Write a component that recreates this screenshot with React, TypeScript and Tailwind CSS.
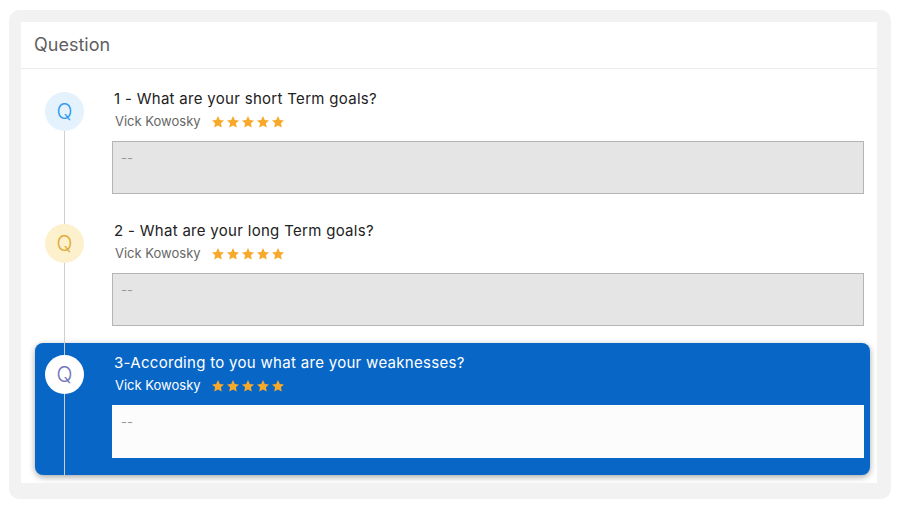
const questions = [
  { id: 1, text: "1 - What are your short Term goals?", tone: "blue" },
  { id: 2, text: "2 - What are your long Term goals?", tone: "yellow" },
  { id: 3, text: "3-According to you what are your weaknesses?", tone: "active" },
];

function Star() {
  return (
    <svg width="14" height="14" viewBox="0 0 24 24" className="fill-[#f7a92b]">
      <path d="M12 1.8l3.1 6.6 7.2.9-5.3 5 1.4 7.1L12 17.9l-6.4 3.5 1.4-7.1-5.3-5 7.2-.9z" />
    </svg>
  );
}

function Stars() {
  return (
    <div className="flex items-center gap-[1px]">
      {[0, 1, 2, 3, 4].map((i) => (
        <Star key={i} />
      ))}
    </div>
  );
}

function QuestionItem({ q, first }: { q: (typeof questions)[number]; first: boolean }) {
  const active = q.tone === "active";
  const circle =
    q.tone === "blue"
      ? "bg-[#e4f2fd] text-[#2f9af0]"
      : q.tone === "yellow"
        ? "bg-[#fdf1cd] text-[#e0aa35]"
        : "bg-white text-[#6f72bb]";

  return (
    <div
      className={
        active
          ? "flex pl-[10px] pr-[6px] bg-[#0866c6] rounded-lg shadow-[0_2px_6px_rgba(0,0,0,0.35)] -mt-px"
          : "flex pl-[10px] pr-[6px]"
      }
    >
      <div className="flex flex-col items-center w-[39px] shrink-0">
        <div className={first ? "h-3 w-px" : "h-3 w-px bg-[#cfcfcf]"} />
        <div
          className={`w-[39px] h-[39px] rounded-full flex items-center justify-center text-[21px] font-light ${circle}`}
        >
          Q
        </div>
        <div className="flex-1 w-px bg-[#cfcfcf]" />
      </div>
      <div className={active ? "flex-1 ml-[30px] pt-[10px] pb-[17px]" : "flex-1 ml-[30px] pt-[9px] pb-[18px]"}>
        <div
          className={
            active
              ? "text-[15px] leading-5 tracking-[0.02em] text-white"
              : "text-[15px] leading-5 tracking-[0.02em] text-[#222]"
          }
        >
          {q.text}
        </div>
        <div className="flex items-center gap-[10px] mt-[3px] h-5 pl-[1px]">
          <span className={active ? "text-[13px] text-white" : "text-[13px] text-[#666]"}>Vick Kowosky</span>
          <Stars />
        </div>
        <div
          className={
            active
              ? "-ml-[2px] mt-[9px] h-[53px] bg-[#fcfcfc] px-[9px] pt-2 text-[13px] text-[#999]"
              : "-ml-[2px] mt-[9px] h-[53px] bg-[#e5e5e5] border border-[#b5b5b5] px-2 pt-[7px] text-[13px] text-[#999]"
          }
        >
          --
        </div>
      </div>
    </div>
  );
}

export default function App() {
  return (
    <div className="w-[900px] h-[508px] bg-white pt-[10px] pl-[9px] font-['Inter',sans-serif]">
      <div className="w-[882px] h-[489px] bg-[#f2f2f2] rounded-[10px] pt-3 pl-3 pr-[14px] pb-4">
        <div className="bg-white h-full">
          <div className="h-[47px] pb-[2px] border-b border-[#ebebeb] pl-[13px] flex items-center text-[18px] text-[#5f5f5f]">
            Question
          </div>
          <div className="pt-[11px] pl-[14px] pr-[7px]">
            {questions.map((q, i) => (
              <QuestionItem key={q.id} q={q} first={i === 0} />
            ))}
          </div>
        </div>
      </div>
    </div>
  );
}
